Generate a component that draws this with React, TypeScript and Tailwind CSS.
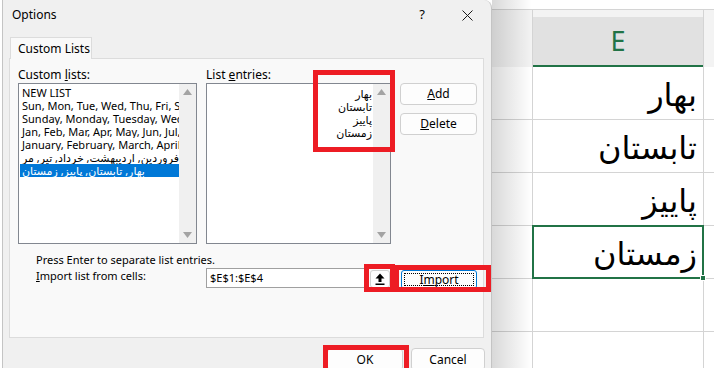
import type { ReactNode } from 'react'

const customLists = [
  'NEW LIST',
  'Sun, Mon, Tue, Wed, Thu, Fri, Sat',
  'Sunday, Monday, Tuesday, Wednesday, Thursday',
  'Jan, Feb, Mar, Apr, May, Jun, Jul, Aug, Sep',
  'January, February, March, April, May, June',
]

const entries = ['بهار', 'تابستان', 'پاییز', 'زمستان']
const cells = ['بهار', 'تابستان', 'پاییز', 'زمستان', '', '']

function Scrollbar() {
  return (
    <div className="w-[17px] h-full bg-[#f0f0f0] flex flex-col justify-between items-center py-[5px]">
      <svg width="9" height="6" viewBox="0 0 9 6">
        <path d="M0 6 L4.5 0 L9 6 Z" fill="#a3a3a3" />
      </svg>
      <svg width="9" height="6" viewBox="0 0 9 6">
        <path d="M0 0 L4.5 6 L9 0 Z" fill="#a3a3a3" />
      </svg>
    </div>
  )
}

function Btn({ children, className }: { children: ReactNode; className?: string }) {
  return (
    <div
      className={`flex items-center justify-center bg-[#fdfdfd] border border-[#d0d0d0] rounded-[4px] ${className ?? ''}`}
    >
      {children}
    </div>
  )
}

function RedBox({ className }: { className: string }) {
  return <div className={`absolute border-[5px] border-[#ed1c24] ${className}`} />
}

export default function App() {
  return (
    <div className="relative w-[714px] h-[368px] overflow-hidden flex bg-white text-[11px] text-black font-['Segoe_UI','Noto_Sans','DejaVu_Sans',sans-serif]">
      {/* sliver of sheet behind dialog */}
      <div className="w-[2px] h-full bg-white shrink-0" />

      {/* Options dialog */}
      <div className="w-[490px] shrink-0 h-full bg-[#f0f0f0] border-l border-r border-[#c4c4c4] rounded-tr-[8px] flex flex-col">
        <div className="h-[30px] shrink-0 flex items-center pl-[9px] pr-[18px]">
          <span className="text-[12px]">Options</span>
          <span className="ml-auto mr-[37px] text-[13px]">?</span>
          <svg width="11" height="11" viewBox="0 0 11 11">
            <path d="M0.5 0.5 L10.5 10.5 M10.5 0.5 L0.5 10.5" stroke="#1a1a1a" strokeWidth="1" />
          </svg>
        </div>

        <div className="mt-[7px] ml-[7px] w-[82px] h-[22px] shrink-0 -mb-px relative z-10 bg-[#f9f9f9] border border-b-0 border-[#dcdcdc] flex items-center pl-[7px] text-[12px]">
          Custom Lists
        </div>

        <div className="ml-[6px] w-[475px] h-[280px] shrink-0 bg-[#f9f9f9] border border-[#dcdcdc] pl-[8px] pt-[8px] flex flex-col">
          <div className="flex gap-[9px]">
            <div className="w-[179px] flex flex-col">
              <div className="leading-[16px] text-[12px]">
                Custom <span className="underline">l</span>ists:
              </div>
              <div className="h-[161px] bg-white border border-[#828790] flex">
                <div className="flex-1 overflow-hidden pt-[2px] pl-[1px]">
                  {customLists.map(item => (
                    <div key={item} className="h-[13px] leading-[13px] pl-[2px] whitespace-nowrap overflow-hidden">
                      {item}
                    </div>
                  ))}
                  <div className="h-[13px] leading-[13px] pl-[2px] whitespace-nowrap overflow-hidden">
                    فروردین, اردیبهشت, خرداد, تیر, مر
                  </div>
                  <div className="h-[13px] leading-[13px] pl-[2px] whitespace-nowrap bg-[#0078d7] text-white">
                    بهار, تابستان, پاییز, زمستان
                  </div>
                </div>
                <Scrollbar />
              </div>
            </div>

            <div className="w-[185px] flex flex-col">
              <div className="leading-[16px] text-[12px]">
                List <span className="underline">e</span>ntries:
              </div>
              <div className="h-[161px] bg-white border border-[#828790] flex">
                <div className="flex-1 pt-[3px] pr-[1px]">
                  {entries.map(e => (
                    <div key={e} className="h-[13px] leading-[13px] text-right">
                      {e}
                    </div>
                  ))}
                </div>
                <Scrollbar />
              </div>
            </div>

            <div className="w-[77px] pt-[16px] flex flex-col gap-[8px] text-[12px]">
              <Btn className="h-[22px]">
                <span>
                  <span className="underline">A</span>dd
                </span>
              </Btn>
              <Btn className="h-[22px]">
                <span>
                  <span className="underline">D</span>elete
                </span>
              </Btn>
            </div>
          </div>

          <div className="mt-[8px] pl-[18px] leading-[16px]">Press Enter to separate list entries.</div>
          <div className="flex items-start">
            <div className="w-[179px] pl-[18px] leading-[16px]">
              <span className="underline">I</span>mport list from cells:
            </div>
            <div className="ml-[9px] w-[161px] h-[20px] bg-white border border-[#a0a0a0] flex items-center pl-[3px]">
              $E$1:$E$4
            </div>
            <div className="ml-[3px] mt-[2px] w-[20px] h-[18px] bg-[#fdfdfd] border border-[#d0d0d0] rounded-[3px] flex items-center justify-center">
              <svg width="10" height="12" viewBox="0 0 10 12">
                <path d="M5 0.5 L9.5 5.5 L6.5 5.5 L6.5 9 L3.5 9 L3.5 5.5 L0.5 5.5 Z" fill="#000" />
                <rect x="0.5" y="10.5" width="9" height="1.5" fill="#000" />
              </svg>
            </div>
            <div className="ml-[11px] mt-[2px] w-[76px] h-[19px] bg-[#fdfdfd] border border-[#0078d4] rounded-[3px] p-[2px]">
              <div className="w-full h-full border border-dotted border-black flex items-center justify-center text-[12px]">
                <span>
                  I<span className="underline">m</span>port
                </span>
              </div>
            </div>
          </div>
        </div>

        <div className="mt-[10px] shrink-0 flex justify-end gap-[8px] pr-[6px] text-[12px]">
          <Btn className="w-[76px] h-[23px]">OK</Btn>
          <Btn className="w-[74px] h-[23px]">Cancel</Btn>
        </div>
      </div>

      {/* Spreadsheet behind */}
      <div className="relative flex-1 h-full flex flex-col">
        <div className="h-[10px] shrink-0 border-b border-[#d4d4d4]" />
        <div className="h-[57px] shrink-0 flex bg-[#f3f3f3]">
          <div className="w-[41px] border-r border-[#d4d4d4]" />
          <div className="w-[170px] mt-[7px] bg-[#e1e1e1] border-b-2 border-[#217346] flex items-center justify-center text-[27px] text-[#217346] font-['Segoe_UI','Noto_Sans',sans-serif]">
            E
          </div>
          <div className="flex-1 border-l border-[#d4d4d4]" />
        </div>
        {cells.map((t, i) => (
          <div key={i} className="h-[53px] flex border-b border-[#d4d4d4] shrink-0">
            <div className="w-[41px] border-r border-[#d4d4d4]" />
            <div
              className={`relative w-[170px] flex items-start justify-end pr-[6px] pt-[8px] text-[32px] leading-[40px] font-['DejaVu_Sans',sans-serif] ${
                i === 3 ? 'outline-2 outline-[#217346] -outline-offset-1' : ''
              }`}
            >
              {t}
              {i === 3 && (
                <div className="absolute -right-[3px] -bottom-[3px] w-[6px] h-[6px] bg-[#217346] border border-white" />
              )}
            </div>
            <div className="flex-1 border-l border-[#d4d4d4]" />
          </div>
        ))}
        {/* dialog shadow */}
        <div className="absolute left-0 top-0 w-[40px] h-full bg-gradient-to-r from-black/15 to-transparent pointer-events-none" />
      </div>

      {/* red annotation boxes */}
      <RedBox className="left-[313px] top-[70px] w-[82px] h-[82px]" />
      <RedBox className="left-[364px] top-[264px] w-[31px] h-[28px]" />
      <RedBox className="left-[394px] top-[265px] w-[97px] h-[27px]" />
      <RedBox className="left-[323px] top-[345px] w-[86px] h-[30px]" />
    </div>
  )
}
